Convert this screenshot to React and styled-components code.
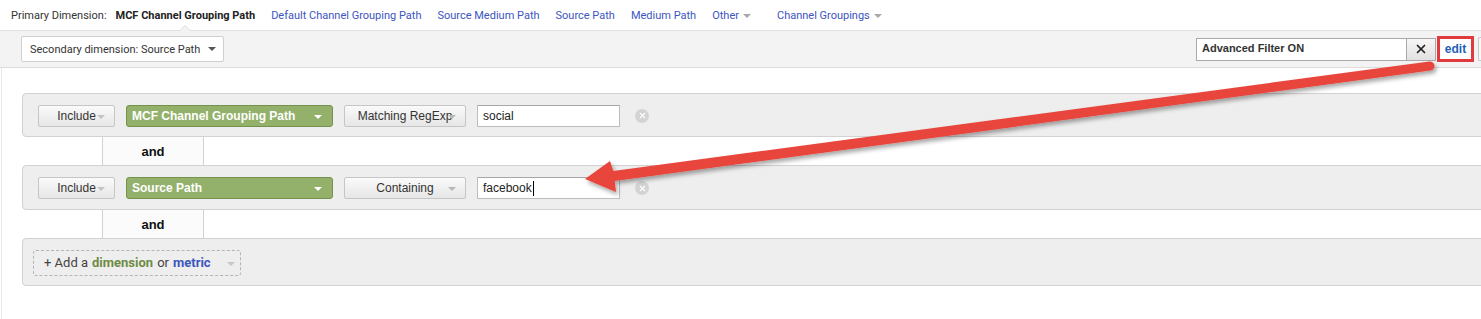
import React from "react";
import styled, { createGlobalStyle } from "styled-components";
import { X } from "lucide-react";

const GlobalStyle = createGlobalStyle`
  body { margin: 0; background: #fff; }
  * { box-sizing: border-box; }
`;

const Page = styled.div`
  position: relative;
  width: 1481px;
  height: 319px;
  overflow: hidden;
  background: #fff;
  font-family: Roboto, "Liberation Sans", sans-serif;
`;

const TopBar = styled.div`
  display: flex;
  align-items: center;
  gap: 16px;
  height: 31px;
  padding: 1px 0 0 11px;
  border-bottom: 1px solid #e0e0e0;
  font-size: 11px;
  color: #333;
  white-space: nowrap;
`;

const Label = styled.span`
  margin-right: -7px;
`;

const Selected = styled.span`
  position: relative;
  font-weight: 700;
  color: #222;
  &::before,
  &::after {
    content: "";
    position: absolute;
    left: 50%;
    bottom: -9px;
    transform: translateX(-50%);
    border: 6px solid transparent;
  }
  &::before { border-bottom-color: #dcdcdc; }
  &::after { bottom: -10px; border-bottom-color: #f3f3f3; }
`;

const DimLink = styled.span`
  display: inline-flex;
  align-items: center;
  gap: 4px;
  color: #3d55bf;
  margin-left: ${({ $push }) => ($push ? "10px" : "0")};
`;

const Caret = styled.span`
  display: inline-block;
  width: 0;
  height: 0;
  border-left: 4px solid transparent;
  border-right: 4px solid transparent;
  border-top: 4px solid ${({ $color }) => $color || "#a8a8a8"};
`;

const ToolBand = styled.div`
  display: flex;
  align-items: center;
  height: 37px;
  padding-left: 21px;
  background: #f3f3f3;
  border-bottom: 1px solid #dcdcdc;
`;

const SecondaryButton = styled.div`
  display: flex;
  align-items: center;
  justify-content: space-between;
  width: 203px;
  height: 26px;
  padding: 0 7px 0 8px;
  background: #fff;
  border: 1px solid #cfcfcf;
  border-radius: 2px;
  font-size: 11px;
  color: #333;
  white-space: nowrap;
`;

const FilterTools = styled.div`
  display: flex;
  align-items: center;
  margin-left: auto;
`;

const FilterInput = styled.div`
  width: 210px;
  height: 23px;
  padding: 3px 0 0 5px;
  background: #fff;
  border: 1px solid #a9a9a9;
  border-right: none;
  font-family: "Liberation Sans", Arial, sans-serif;
  font-size: 11px;
  font-weight: 700;
  color: #333;
`;

const ClearButton = styled.div`
  display: grid;
  place-items: center;
  width: 30px;
  height: 23px;
  background: linear-gradient(#f6f6f6, #e1e1e1);
  border: 1px solid #a9a9a9;
  color: #222;
`;

const EditButton = styled.div`
  display: grid;
  place-items: center;
  width: 37px;
  height: 26px;
  margin-left: 1px;
  border: 3px solid #e0393e;
  background: #fff;
  font-family: "Liberation Sans", Arial, sans-serif;
  font-size: 12px;
  font-weight: 700;
  color: #1d5fb8;
`;

const CutButton = styled.div`
  width: 3px;
  height: 24px;
  margin-left: 4px;
  border: 1px solid #c8c8c8;
  border-right: none;
  border-radius: 2px 0 0 2px;
  background: #f8f8f8;
`;

const Content = styled.div`
  height: 252px;
  margin-left: 1px;
  padding: 25px 0 0 20px;
  border-left: 1px solid #e9e9e9;
  font-family: "Liberation Sans", Arial, sans-serif;
  font-size: 12px;
  color: #333;
`;

const FilterRow = styled.div`
  display: flex;
  align-items: center;
  gap: 11px;
  height: ${({ $h }) => $h || 44}px;
  padding-left: ${({ $pad }) => $pad ?? 15}px;
  padding-top: 1px;
  margin-right: -10px;
  background: #eeeeee;
  border: 1px solid #d2d2d2;
  border-radius: 4px;
`;

const AndRow = styled.div`
  display: flex;
  height: 28px;
`;

const AndSpacer = styled.div`
  width: 80px;
`;

const AndTab = styled.div`
  display: grid;
  place-items: center;
  width: 102px;
  border-left: 1px solid #d2d2d2;
  border-right: 1px solid #d2d2d2;
  background: #fbfbfb;
  font-size: 13px;
  font-weight: 700;
  color: #111;
`;

const GrayButton = styled.div`
  position: relative;
  display: grid;
  place-items: center;
  width: ${({ $w }) => $w}px;
  height: 22px;
  background: linear-gradient(#fafafa, #e6e6e6);
  border: 1px solid #c6c6c6;
  border-radius: 2px;
  color: #333;
  ${Caret} {
    position: absolute;
    right: 9px;
    top: 9px;
  }
`;

const GreenButton = styled.div`
  position: relative;
  display: flex;
  align-items: center;
  width: 207px;
  height: 22px;
  padding-left: 5px;
  background: #94b16c;
  border: 1px solid #74924c;
  border-radius: 3px;
  font-weight: 700;
  color: #fff;
  ${Caret} {
    position: absolute;
    right: 10px;
    top: 9px;
  }
`;

const ValueInput = styled.div`
  display: flex;
  align-items: center;
  width: 143px;
  height: 22px;
  padding-left: 5px;
  background: #fff;
  border: 1px solid #bdbdbd;
  border-top-color: #a8a8a8;
  color: #222;
`;

const TextCursor = styled.span`
  width: 1px;
  height: 15px;
  margin-left: 1px;
  background: #000;
`;

const RemoveIcon = styled.div`
  display: grid;
  place-items: center;
  width: 14px;
  height: 14px;
  margin-left: 4px;
  border-radius: 50%;
  background: #d3d3d3;
  color: #fff;
`;

const AddButton = styled.div`
  position: relative;
  display: flex;
  align-items: center;
  width: 208px;
  height: 26px;
  padding-left: 10px;
  border: 1px dashed #b4b4b4;
  border-radius: 3px;
  font-family: Roboto, "Liberation Sans", sans-serif;
  font-size: 13px;
  color: #444;
  ${Caret} {
    position: absolute;
    right: 5px;
    top: 11px;
  }
`;

const Dim = styled.b`
  margin: 0 4px;
  color: #6e8b45;
`;

const Metric = styled.b`
  margin-left: 4px;
  color: #3c58bd;
`;

const ArrowLayer = styled.svg`
  position: absolute;
  top: 0;
  left: 0;
  pointer-events: none;
`;

const conditions = [
  { dim: "MCF Channel Grouping Path", match: "Matching RegExp", value: "social" },
  { dim: "Source Path", match: "Containing", value: "facebook", cursor: true },
];

const Remove = () => (
  <RemoveIcon>
    <X size={9} strokeWidth={3} />
  </RemoveIcon>
);

export default function App() {
  return (
    <Page>
      <GlobalStyle />
      <TopBar>
        <Label>Primary Dimension:</Label>
        <Selected>MCF Channel Grouping Path</Selected>
        <DimLink>Default Channel Grouping Path</DimLink>
        <DimLink>Source Medium Path</DimLink>
        <DimLink>Source Path</DimLink>
        <DimLink>Medium Path</DimLink>
        <DimLink>
          Other <Caret />
        </DimLink>
        <DimLink $push>
          Channel Groupings <Caret />
        </DimLink>
      </TopBar>

      <ToolBand>
        <SecondaryButton>
          Secondary dimension: Source Path <Caret $color="#555" />
        </SecondaryButton>
        <FilterTools>
          <FilterInput>Advanced Filter ON</FilterInput>
          <ClearButton>
            <X size={14} strokeWidth={3} />
          </ClearButton>
          <EditButton>edit</EditButton>
          <CutButton />
        </FilterTools>
      </ToolBand>

      <Content>
        {conditions.map((c, i) => (
          <React.Fragment key={c.dim}>
            <FilterRow $h={i === 0 ? 44 : 45}>
              <GrayButton $w={77}>
                Include
                <Caret $color="#c4c4c4" />
              </GrayButton>
              <GreenButton>
                {c.dim}
                <Caret $color="#fff" />
              </GreenButton>
              <GrayButton $w={122}>
                {c.match}
                <Caret $color="#b8b8b8" />
              </GrayButton>
              <ValueInput>
                {c.value}
                {c.cursor && <TextCursor />}
              </ValueInput>
              <Remove />
            </FilterRow>
            <AndRow>
              <AndSpacer />
              <AndTab>and</AndTab>
            </AndRow>
          </React.Fragment>
        ))}
        <FilterRow $h={48} $pad={10}>
          <AddButton>
            + Add a<Dim>dimension</Dim>or<Metric>metric</Metric>
            <Caret $color="#c8c8c8" />
          </AddButton>
        </FilterRow>
      </Content>

      <ArrowLayer width="1481" height="319" viewBox="0 0 1481 319">
        <defs>
          <filter id="arrowShadow" x="-5%" y="-50%" width="110%" height="200%">
            <feDropShadow dx="2" dy="3" stdDeviation="2" floodColor="#000" floodOpacity="0.35" />
          </filter>
        </defs>
        <path
          d="M585 179 L610 161 L613.3 171 L1429.4 61.5 A4.5 4.5 0 0 1 1430.6 70.5 L614.7 181 L616 192 Z"
          fill="#e8453c"
          filter="url(#arrowShadow)"
        />
      </ArrowLayer>
    </Page>
  );
}
